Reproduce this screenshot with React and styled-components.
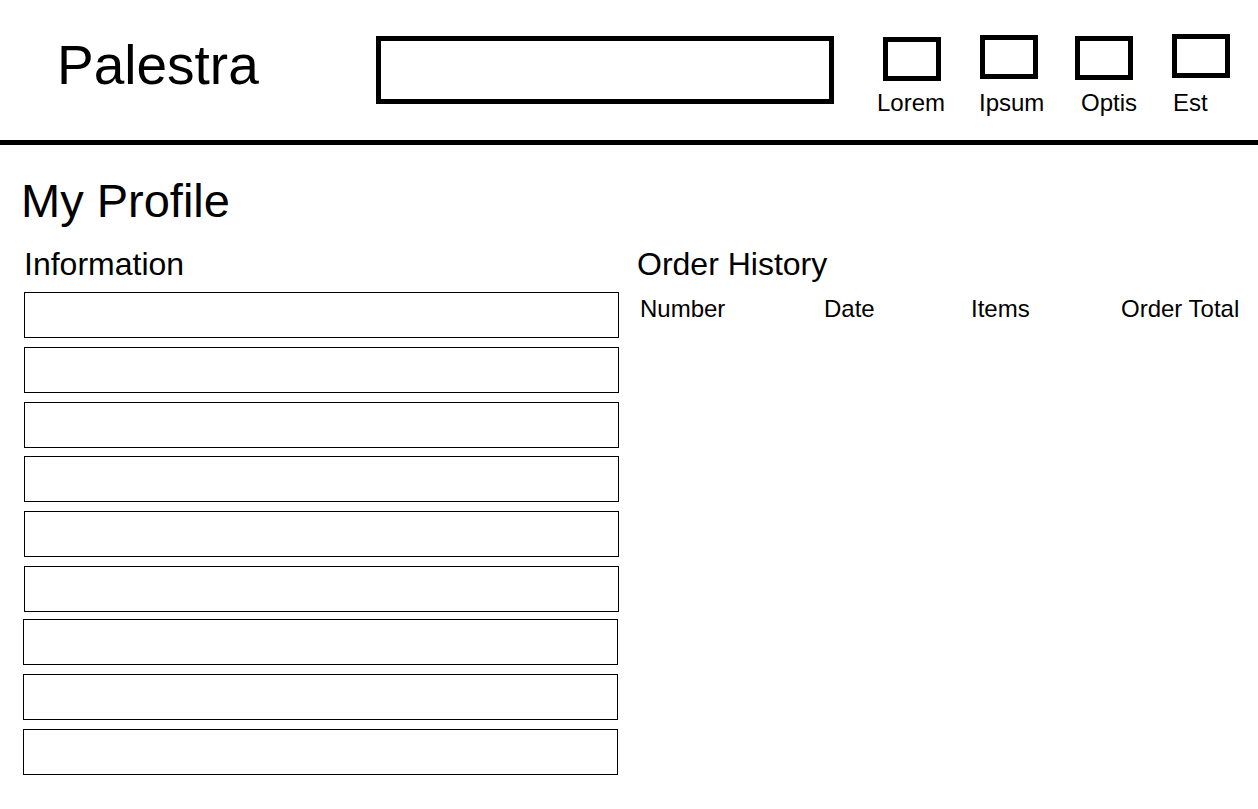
import React from 'react'
import styled, { createGlobalStyle } from 'styled-components'

const navItems = [
    { label: 'Lorem', gap: 42, boxX: 7, boxTop: 37, labelX: 1 },
    { label: 'Ipsum', gap: 22, boxX: 2, boxTop: 35, labelX: 1 },
    { label: 'Optis', gap: 17, boxX: 0, boxTop: 36, labelX: 6 },
    { label: 'Est', gap: 17, boxX: 0, boxTop: 34, labelX: 1 },
]

// hand-placed wireframe boxes: spacing before each and a 1px shift on the last three
const fields = [
    { space: 0, shift: 1 },
    { space: 9, shift: 1 },
    { space: 9, shift: 1 },
    { space: 8, shift: 1 },
    { space: 9, shift: 1 },
    { space: 9, shift: 1 },
    { space: 7, shift: 0 },
    { space: 9, shift: 0 },
    { space: 9, shift: 0 },
]

const columns = ['Number', 'Date', 'Items', 'Order Total']

const App = () => (
    <>
        <GlobalStyle />
        <Page>
            <Header>
                <Logo>Palestra</Logo>
                <Search />
                <Nav>
                    {navItems.map(item => (
                        <NavItem key={item.label} gap={item.gap}>
                            <NavBox x={item.boxX} top={item.boxTop} />
                            <NavLabel x={item.labelX} top={90.7 - (item.boxTop + 44)}>
                                {item.label}
                            </NavLabel>
                        </NavItem>
                    ))}
                </Nav>
            </Header>
            <Main>
                <Title>My Profile</Title>
                <Columns>
                    <Section>
                        <Heading>Information</Heading>
                        <FieldList>
                            {fields.map((field, i) => (
                                <Field key={i} space={field.space} shift={field.shift} />
                            ))}
                        </FieldList>
                    </Section>
                    <Section>
                        <Heading>Order History</Heading>
                        <TableHead>
                            {columns.map(col => <ColumnLabel key={col}>{col}</ColumnLabel>)}
                        </TableHead>
                    </Section>
                </Columns>
            </Main>
        </Page>
    </>
)

export default App

const GlobalStyle = createGlobalStyle`
    html, body {
        margin: 0;
        padding: 0;
        background: #ffffff;
    }
    body {
        font-family: "Liberation Sans", Arial, sans-serif;
        color: #000000;
        overflow: hidden;
    }
`

const Page = styled.div`
    width: 1258px;
    min-height: 809px;
    background: #ffffff;
`

const Header = styled.header`
    display: flex;
    align-items: flex-start;
    height: 140px;
    border-bottom: 5px solid #000;
    overflow: hidden;
`

const Logo = styled.div`
    width: 376px;
    box-sizing: border-box;
    padding: 38px 0 0 57px;
    font-size: 55px;
    line-height: 1;
`

const Search = styled.div`
    margin-top: 36px;
    width: 458px;
    height: 68px;
    box-sizing: border-box;
    border: 5px solid #000;
`

const Nav = styled.nav`
    display: flex;
    align-items: flex-start;
`

const NavItem = styled.div`
    display: flex;
    flex-direction: column;
    align-items: flex-start;
    width: 80px;
    margin-left: ${({ gap }) => gap}px;
`

const NavBox = styled.div`
    width: 58px;
    height: 44px;
    box-sizing: border-box;
    border: 5px solid #000;
    margin-left: ${({ x }) => x}px;
    margin-top: ${({ top }) => top}px;
`

const NavLabel = styled.span`
    font-size: 24px;
    line-height: 1;
    margin-left: ${({ x }) => x}px;
    margin-top: ${({ top }) => top}px;
`

const Main = styled.main`
    padding: 32px 0 0 18px;
`

const Title = styled.h1`
    margin: 0 0 0 3px;
    font-size: 47px;
    font-weight: normal;
    line-height: 1;
`

const Columns = styled.div`
    display: grid;
    grid-template-columns: 613px 1fr;
    margin-top: 24px;
    padding-left: 5px;
`

const Section = styled.section`
    display: flex;
    flex-direction: column;
`

const Heading = styled.h2`
    margin: 0 0 0 1px;
    font-size: 32px;
    font-weight: normal;
    line-height: 1;
`

const FieldList = styled.div`
    display: flex;
    flex-direction: column;
    margin-top: 12px;
`

const Field = styled.div`
    width: 595px;
    height: 46px;
    box-sizing: border-box;
    border: 1px solid #000;
    margin-top: ${({ space }) => space}px;
    margin-left: ${({ shift }) => shift}px;
`

const TableHead = styled.div`
    display: grid;
    grid-template-columns: 184px 147px 150px auto;
    margin: 17px 0 0 4px;
`

const ColumnLabel = styled.span`
    font-size: 24px;
    line-height: 1;
    white-space: nowrap;
`
